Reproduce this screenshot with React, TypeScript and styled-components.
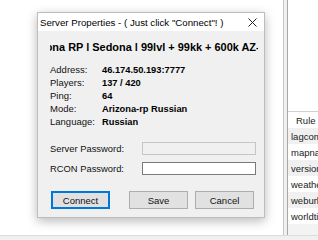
import styled, { createGlobalStyle } from "styled-components";

const GlobalStyle = createGlobalStyle`
  html, body {
    margin: 0;
    padding: 0;
    background: #ffffff;
    font-family: "Liberation Sans", Arial, sans-serif;
    color: #000;
  }
`;

const INFO: [string, string][] = [
  ["Address:", "46.174.50.193:7777"],
  ["Players:", "137 / 420"],
  ["Ping:", "64"],
  ["Mode:", "Arizona-rp Russian"],
  ["Language:", "Russian"],
];

const RULES = ["lagcomp", "mapname", "version", "weather", "weburl", "worldtime"];

export default function App() {
  return (
    <>
      <GlobalStyle />
      <Screen>
        <Main>
          <Desktop>
            <Dialog>
              <TitleBar>
                <Title>Server Properties - ( Just click "Connect"! )</Title>
                <CloseIcon width="9" height="9" viewBox="0 0 9 9">
                  <path d="M0.5 0.5 L8.5 8.5 M8.5 0.5 L0.5 8.5" stroke="#222" strokeWidth="1" />
                </CloseIcon>
              </TitleBar>
              <Body>
                <HostName>
                  <HostText>Arizona RP | Sedona | 99lvl + 99kk + 600k AZ-Coins</HostText>
                </HostName>
                <InfoGrid>
                  {INFO.map(([label, value]) => (
                    <InfoRow key={label}>
                      <InfoLabel>{label}</InfoLabel>
                      <InfoValue>{value}</InfoValue>
                    </InfoRow>
                  ))}
                </InfoGrid>
                <Fields>
                  <FieldRow>
                    <FieldLabel>Server Password:</FieldLabel>
                    <Input $disabled />
                  </FieldRow>
                  <FieldRow>
                    <FieldLabel>RCON Password:</FieldLabel>
                    <Input />
                  </FieldRow>
                </Fields>
                <ButtonRow>
                  <Button $primary>Connect</Button>
                  <Button>Save</Button>
                  <Button>Cancel</Button>
                </ButtonRow>
              </Body>
            </Dialog>
          </Desktop>
          <Splitter />
          <SidePanel>
            <SideTop />
            <ListHeader>Rule</ListHeader>
            {RULES.map((r, i) => (
              <ListRow key={r} $alt={i % 2 === 0}>
                {r}
              </ListRow>
            ))}
            <ScrollStrip />
          </SidePanel>
        </Main>
        <StatusStrip />
      </Screen>
    </>
  );
}

const Screen = styled.div`
  width: 318px;
  height: 240px;
  overflow: hidden;
  display: flex;
  flex-direction: column;
`;

const Main = styled.div`
  height: 236px;
  display: flex;
`;

const Desktop = styled.div`
  width: 283px;
  flex-shrink: 0;
  padding: 12px 0 0 37px;
  box-sizing: border-box;
  background: #ffffff;
`;

const Dialog = styled.div`
  width: 228px;
  box-sizing: border-box;
  border: 1px solid #bdbdbd;
  background: #f0f0f0;
  box-shadow: 0 3px 10px rgba(0, 0, 0, 0.28);
`;

const TitleBar = styled.div`
  height: 18px;
  background: #ffffff;
  display: flex;
  align-items: center;
  justify-content: space-between;
  padding: 0 7px 0 2px;
`;

const Title = styled.span`
  font-size: 9.7px;
  color: #000;
  white-space: nowrap;
`;

const CloseIcon = styled.svg`
  display: block;
`;

const Body = styled.div`
  padding: 6px 8px 8px 12px;
`;

const HostName = styled.div`
  width: 208px;
  height: 14px;
  overflow: hidden;
  white-space: nowrap;
`;

const HostText = styled.span`
  display: inline-block;
  margin-left: -25px;
  font-size: 10.95px;
  font-weight: bold;
  line-height: 14px;
`;

const InfoGrid = styled.div`
  margin-top: 12px;
  display: flex;
  flex-direction: column;
`;

const InfoRow = styled.div`
  display: flex;
  height: 13px;
  align-items: center;
  font-size: 9.5px;
`;

const InfoLabel = styled.span`
  width: 52px;
  color: #111;
`;

const InfoValue = styled.span`
  font-weight: bold;
  font-size: 9.3px;
`;

const Fields = styled.div`
  margin-top: 14px;
  display: flex;
  flex-direction: column;
  gap: 7px;
`;

const FieldRow = styled.div`
  display: flex;
  align-items: center;
  height: 13px;
`;

const FieldLabel = styled.span`
  width: 92px;
  font-size: 9.4px;
  color: #111;
`;

const Input = styled.div<{ $disabled?: boolean }>`
  width: 114px;
  height: 13px;
  box-sizing: border-box;
  border: 1px solid ${(p) => (p.$disabled ? "#c6c6c6" : "#7a7a7a")};
  background: ${(p) => (p.$disabled ? "#f0f0f0" : "#ffffff")};
`;

const ButtonRow = styled.div`
  margin-top: 16px;
  display: flex;
  justify-content: flex-end;
  gap: 7px;
  padding: 0 2px 0 1px;

  & > :first-child {
    margin-right: auto;
  }
`;

const Button = styled.div<{ $primary?: boolean }>`
  width: 59px;
  height: 18px;
  box-sizing: border-box;
  display: flex;
  align-items: center;
  justify-content: center;
  background: #e1e1e1;
  border: ${(p) => (p.$primary ? "2px solid #0078d7" : "1px solid #adadad")};
  font-size: 9.5px;
  color: #111;
`;

const Splitter = styled.div`
  width: 5px;
  flex-shrink: 0;
  box-sizing: border-box;
  border-left: 1px solid #c8c8c8;
  border-right: 1px solid #a8a8a8;
  background: #f0f0f0;
`;

const SidePanel = styled.div`
  flex: 1;
  min-width: 0;
  overflow: hidden;
  display: flex;
  flex-direction: column;
  background: #ffffff;
`;

const SideTop = styled.div`
  height: 111px;
  border-bottom: 1px solid #d0d0d0;
`;

const ListHeader = styled.div`
  height: 16px;
  display: flex;
  align-items: center;
  padding-left: 8px;
  font-size: 9.5px;
  color: #222;
  white-space: nowrap;
`;

const ListRow = styled.div<{ $alt: boolean }>`
  height: 16px;
  display: flex;
  align-items: center;
  padding-left: 3px;
  font-size: 9.5px;
  color: #222;
  white-space: nowrap;
  overflow: hidden;
  background: ${(p) => (p.$alt ? "#f0f0f0" : "#ffffff")};
`;

const ScrollStrip = styled.div`
  flex: 1;
  background: #f3f3f3;
`;

const StatusStrip = styled.div`
  height: 4px;
  border-top: 1px solid #dcdcdc;
  background: #f0f0f0;
`;
